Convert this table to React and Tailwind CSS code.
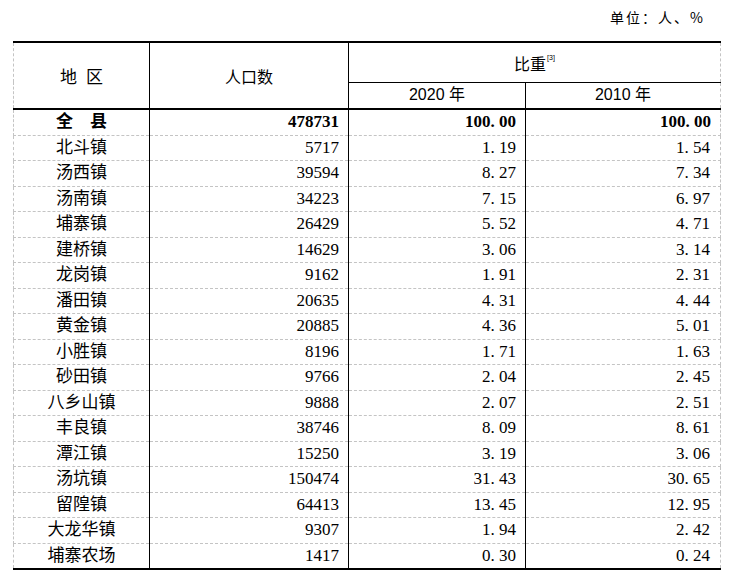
const rows = [
  ['北斗镇', '5717', '1.19', '1.54'],
  ['汤西镇', '39594', '8.27', '7.34'],
  ['汤南镇', '34223', '7.15', '6.97'],
  ['埔寨镇', '26429', '5.52', '4.71'],
  ['建桥镇', '14629', '3.06', '3.14'],
  ['龙岗镇', '9162', '1.91', '2.31'],
  ['潘田镇', '20635', '4.31', '4.44'],
  ['黄金镇', '20885', '4.36', '5.01'],
  ['小胜镇', '8196', '1.71', '1.63'],
  ['砂田镇', '9766', '2.04', '2.45'],
  ['八乡山镇', '9888', '2.07', '2.51'],
  ['丰良镇', '38746', '8.09', '8.61'],
  ['潭江镇', '15250', '3.19', '3.06'],
  ['汤坑镇', '150474', '31.43', '30.65'],
  ['留隍镇', '64413', '13.45', '12.95'],
  ['大龙华镇', '9307', '1.94', '2.42'],
  ['埔寨农场', '1417', '0.30', '0.24'],
];

// SimSun-style wide decimal point
const Dec = ({ v }) => {
  const [a, b] = v.split('.');
  return (
    <>
      {a}.<span className="inline-block w-[0.25em]" />{b}
    </>
  );
};

// per-side border helpers
const leftDash = 'border-l border-l-[#c4c4c4] [border-left-style:dashed]';
const rightDash = 'border-r border-r-[#c4c4c4] [border-right-style:dashed]';
const rightSolid = 'border-r border-r-black [border-right-style:solid]';
const bottomDash = 'border-b border-b-[#c4c4c4] [border-bottom-style:dashed]';
const bottomThick = 'border-b-2 border-b-black [border-bottom-style:solid]';

const App = () => {
  return (
    <div className="w-[731px] h-[577px] bg-white text-black font-['Liberation_Serif','Noto_Sans_CJK_SC',serif]">
      <div className="h-[41px] flex justify-end items-start pt-[8px] pr-[26px] text-[14px] leading-[18px] tracking-[2px] font-['Noto_Sans_CJK_SC',sans-serif]">
        单位：人、%
      </div>
      <div className="pl-[13px]">
        <table className="table-fixed border-collapse w-[707px]">
          <colgroup>
            <col className="w-[136px]" />
            <col className="w-[199px]" />
            <col className="w-[177px]" />
            <col className="w-[195px]" />
          </colgroup>
          <thead className="font-['Noto_Sans_CJK_SC',sans-serif] text-[16px] leading-[20px]">
            <tr className="h-[40px]">
              <th rowSpan={2} className={`font-normal border-t-2 border-t-black [border-top-style:solid] ${leftDash} ${rightSolid} ${bottomThick} text-[17px]`}>
                地<span className="inline-block w-[9px]" />区
              </th>
              <th rowSpan={2} className={`font-normal border-t-2 border-t-black [border-top-style:solid] ${rightSolid} ${bottomThick}`}>
                人口数
              </th>
              <th colSpan={2} className={`font-normal border-t-2 border-t-black [border-top-style:solid] border-b border-b-black [border-bottom-style:solid] ${rightDash} pt-[2px]`}>
                比重<sup className="text-[7px] align-[7px] ml-[1px] font-['Liberation_Sans',sans-serif]">[3]</sup>
              </th>
            </tr>
            <tr className="h-[27px]">
              <th className={`font-normal ${rightSolid} ${bottomThick} font-['Liberation_Sans','Noto_Sans_CJK_SC',sans-serif]`}>
                2020 年
              </th>
              <th className={`font-normal ${rightDash} ${bottomThick} font-['Liberation_Sans','Noto_Sans_CJK_SC',sans-serif]`}>
                2010 年
              </th>
            </tr>
          </thead>
          <tbody className="text-[17px] leading-[20px]">
            <tr className="h-[26px] font-bold">
              <td className={`text-center ${leftDash} ${rightSolid} ${bottomDash}`}>全　县</td>
              <td className={`text-right pr-[9px] ${rightSolid} ${bottomDash}`}>478731</td>
              <td className={`text-right pr-[9px] ${rightSolid} ${bottomDash}`}>
                <Dec v="100.00" />
              </td>
              <td className={`text-right pr-[9px] ${rightDash} ${bottomDash}`}>
                <Dec v="100.00" />
              </td>
            </tr>
            {rows.map((r, i) => {
              const bb = i === rows.length - 1 ? bottomThick : bottomDash;
              return (
                <tr key={r[0]} className="h-[25.5px]">
                  <td className={`text-center ${leftDash} ${rightSolid} ${bb}`}>{r[0]}</td>
                  <td className={`text-right pr-[9px] ${rightSolid} ${bb}`}>{r[1]}</td>
                  <td className={`text-right pr-[9px] ${rightSolid} ${bb}`}>
                    <Dec v={r[2]} />
                  </td>
                  <td className={`text-right pr-[10px] ${rightDash} ${bb}`}>
                    <Dec v={r[3]} />
                  </td>
                </tr>
              );
            })}
          </tbody>
        </table>
      </div>
    </div>
  );
};

export default App;
